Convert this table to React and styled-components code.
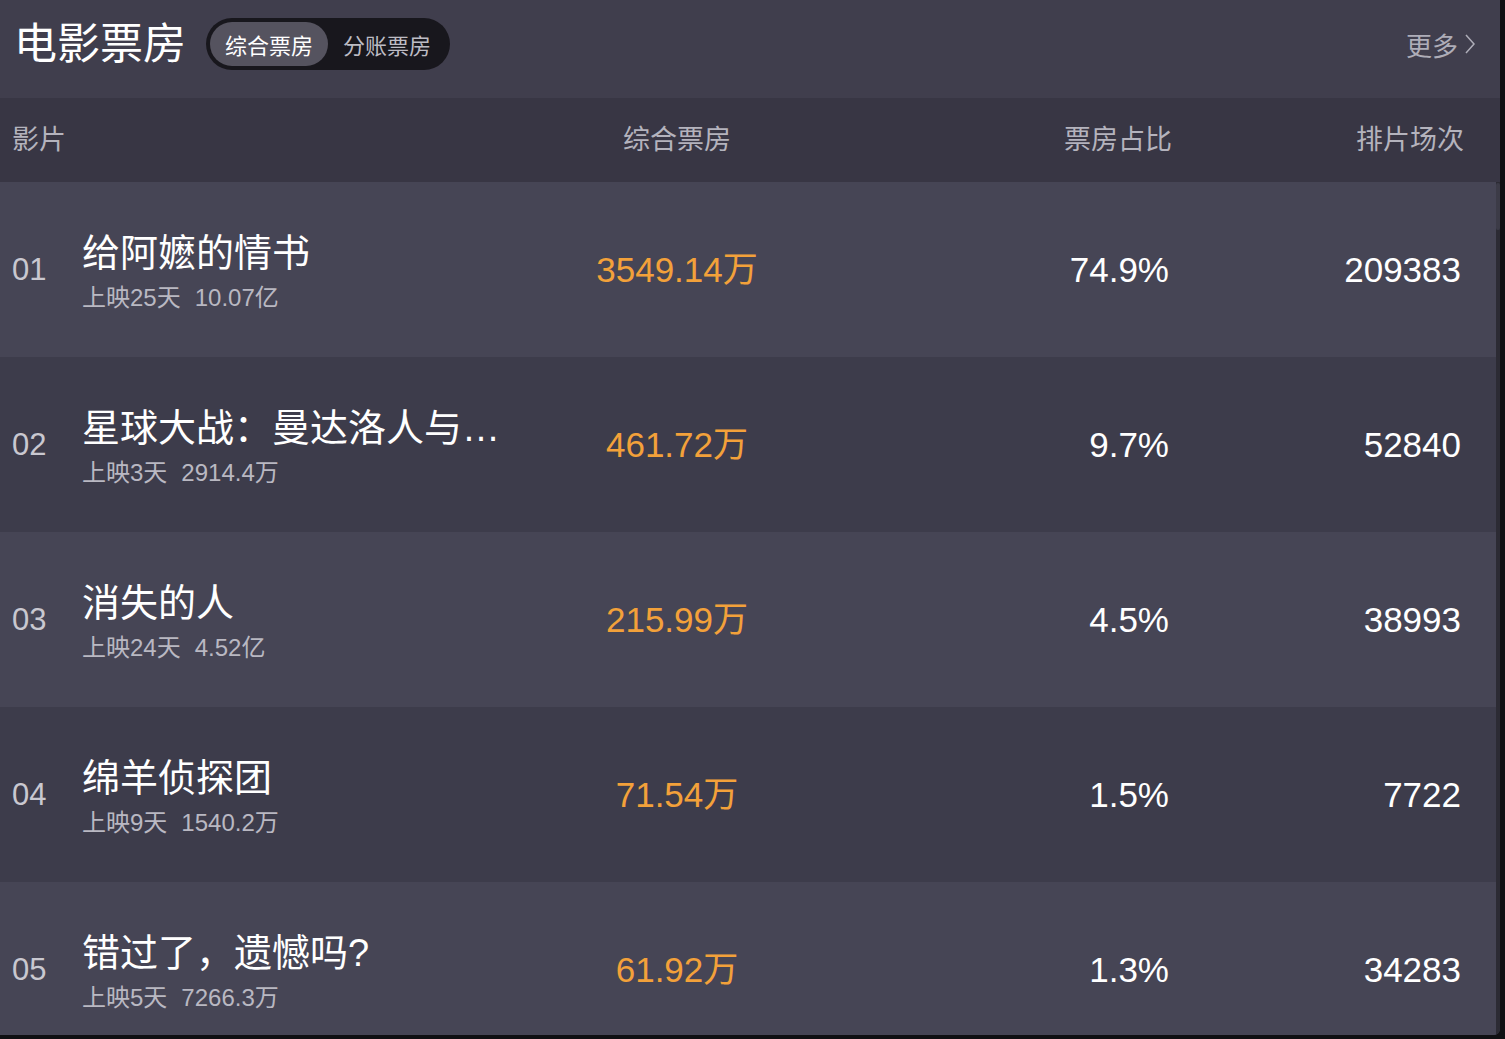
import React from "react";
import styled, { createGlobalStyle } from "styled-components";

const GlobalStyle = createGlobalStyle`
  html, body {
    margin: 0;
    padding: 0;
    background: #101013;
  }
  body {
    font-family: "Liberation Sans", "Noto Sans CJK SC", sans-serif;
  }
`;

const movies = [
  { rank: "01", name: "给阿嬷的情书", days: "上映25天", total: "10.07亿", box: "3549.14万", rate: "74.9%", shows: "209383" },
  { rank: "02", name: "星球大战：曼达洛人与古古", days: "上映3天", total: "2914.4万", box: "461.72万", rate: "9.7%", shows: "52840" },
  { rank: "03", name: "消失的人", days: "上映24天", total: "4.52亿", box: "215.99万", rate: "4.5%", shows: "38993" },
  { rank: "04", name: "绵羊侦探团", days: "上映9天", total: "1540.2万", box: "71.54万", rate: "1.5%", shows: "7722" },
  { rank: "05", name: "错过了，遗憾吗?", days: "上映5天", total: "7266.3万", box: "61.92万", rate: "1.3%", shows: "34283" },
];

const Card = styled.div`
  width: 1500px;
  height: 1035px;
  display: flex;
  flex-direction: column;
  background: #3d3c4b;
  border-bottom-right-radius: 6px;
  overflow: hidden;
`;

const Header = styled.div`
  height: 98px;
  box-sizing: border-box;
  padding: 0 24px 10px 14px;
  display: flex;
  align-items: center;
  background: #403e4d;
`;

const Title = styled.div`
  font-size: 43px;
  line-height: 50px;
  color: #ffffff;
  margin-right: 20px;
`;

const Toggle = styled.div`
  display: flex;
  padding: 4px;
  border-radius: 26px;
  background: #18171d;
`;

const ToggleItem = styled.div`
  height: 44px;
  padding: 0 15px;
  display: flex;
  align-items: center;
  border-radius: 22px;
  font-size: 22px;
  color: ${(p) => (p.active ? "#ffffff" : "#bdbcc4")};
  background: ${(p) => (p.active ? "#55535f" : "transparent")};
`;

const More = styled.div`
  margin-left: auto;
  display: flex;
  align-items: center;
  gap: 6px;
  font-size: 26px;
  color: #aeadb8;
`;

const Grid = styled.div`
  display: grid;
  grid-template-columns: 510px 334px 325px 292px;
  align-items: center;
`;

const HeadRow = styled(Grid)`
  height: 84px;
  box-sizing: border-box;
  padding-bottom: 6px;
  background: #383644;
  font-size: 27px;
  color: #b4b3bd;
`;

const HeadCell = styled.div`
  text-align: ${(p) => p.align || "left"};
  padding-left: ${(p) => (p.first ? "12px" : "0")};
  margin-right: ${(p) => (p.align === "right" ? "-3px" : "0")};
`;

const Body = styled.div`
  flex: 1;
  display: flex;
  min-height: 0;
`;

const List = styled.div`
  flex: 1;
  overflow: hidden;
`;

const Row = styled(Grid)`
  height: 175px;
  background: ${(p) => (p.odd ? "#464555" : "#3d3c4b")};
`;

const Info = styled.div`
  display: flex;
  align-items: center;
  padding-left: 12px;
  min-width: 0;
`;

const Rank = styled.div`
  width: 70px;
  flex-shrink: 0;
  font-size: 31px;
  color: #c9c8d0;
`;

const NameBlock = styled.div`
  min-width: 0;
  width: 430px;
  margin-top: 2px;
`;

const Name = styled.div`
  font-size: 38px;
  line-height: 46px;
  color: #ffffff;
  white-space: nowrap;
  overflow: hidden;
  text-overflow: ellipsis;
`;

const Sub = styled.div`
  margin-top: 8px;
  font-size: 24px;
  line-height: 28px;
  color: #b9b8c2;
  white-space: nowrap;
`;

const Total = styled.span`
  margin-left: 14px;
`;

const Value = styled.div`
  font-size: 35px;
  line-height: 40px;
  text-align: ${(p) => p.align};
  color: ${(p) => (p.accent ? "#f3a13a" : "#ffffff")};
`;

const Track = styled.div`
  width: 4px;
  background: #2c2b34;
  padding-top: 1px;
`;

const Thumb = styled.div`
  height: 47px;
  background: #3c3b47;
  border-radius: 2px;
`;

const Chevron = () => (
  <svg width="12" height="20" viewBox="0 0 12 20" fill="none">
    <path d="M2 1 L10 10 L2 19" stroke="#aeadb8" strokeWidth="1.5" />
  </svg>
);

const App = () => {
  return (
    <>
      <GlobalStyle />
      <Card>
        <Header>
          <Title>电影票房</Title>
          <Toggle>
            <ToggleItem active>综合票房</ToggleItem>
            <ToggleItem>分账票房</ToggleItem>
          </Toggle>
          <More>
            更多
            <Chevron />
          </More>
        </Header>
        <HeadRow>
          <HeadCell first>影片</HeadCell>
          <HeadCell align="center">综合票房</HeadCell>
          <HeadCell align="right">票房占比</HeadCell>
          <HeadCell align="right">排片场次</HeadCell>
        </HeadRow>
        <Body>
          <List>
            {movies.map((m, i) => (
              <Row key={m.rank} odd={i % 2 === 0}>
                <Info>
                  <Rank>{m.rank}</Rank>
                  <NameBlock>
                    <Name>{m.name}</Name>
                    <Sub>
                      {m.days}
                      <Total>{m.total}</Total>
                    </Sub>
                  </NameBlock>
                </Info>
                <Value align="center" accent>{m.box}</Value>
                <Value align="right">{m.rate}</Value>
                <Value align="right">{m.shows}</Value>
              </Row>
            ))}
          </List>
          <Track>
            <Thumb />
          </Track>
        </Body>
      </Card>
    </>
  );
};

export default App;
